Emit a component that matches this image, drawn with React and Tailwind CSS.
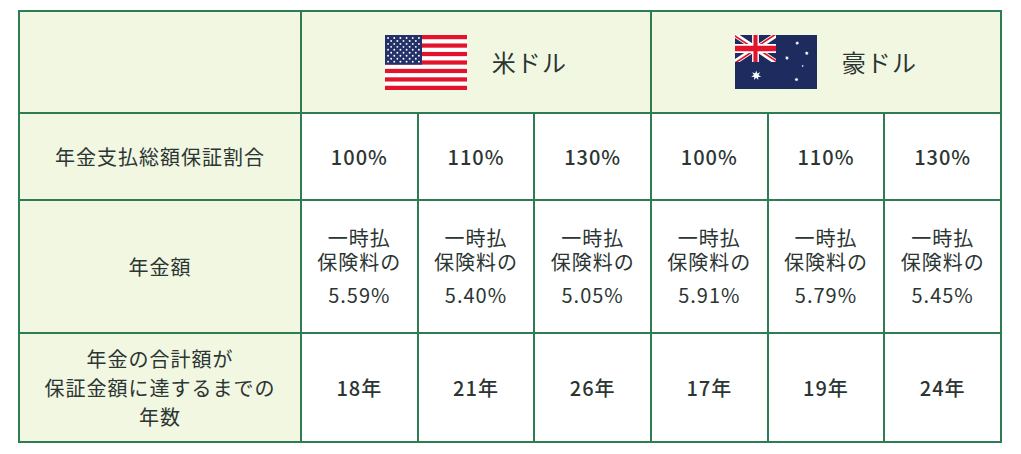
import React from 'react';

const FONT = { fontFamily: '"Noto Sans CJK JP", "Noto Sans", sans-serif' };

function starPoints(cx, cy, outer, inner, n) {
    const pts = [];
    for (let i = 0; i < n * 2; i++) {
        const r = i % 2 === 0 ? outer : inner;
        const a = (Math.PI / n) * i - Math.PI / 2;
        pts.push((cx + r * Math.cos(a)).toFixed(2) + ',' + (cy + r * Math.sin(a)).toFixed(2));
    }
    return pts.join(' ');
}

function UsFlag() {
    const W = 82, H = 55, sh = H / 13, cw = 37, ch = sh * 7;
    const stars = [];
    for (let i = 0; i < 9; i++) {
        const count = i % 2 === 0 ? 6 : 5;
        for (let j = 0; j < count; j++) {
            const x = i % 2 === 0 ? (cw * (2 * j + 1)) / 12 : (cw * (2 * j + 2)) / 12;
            const y = (ch * (i + 1)) / 10;
            stars.push(<circle key={i + '-' + j} cx={x} cy={y} r="0.95" fill="#fff" />);
        }
    }
    return (
        <svg width={W} height={H} viewBox={`0 0 ${W} ${H}`} className="shrink-0">
            <rect width={W} height={H} fill="#fff" />
            {Array.from({ length: 7 }).map((_, i) => (
                <rect key={i} x="0" y={i * 2 * sh} width={W} height={sh} fill="#e3132b" />
            ))}
            <rect width={cw} height={ch} fill="#243169" />
            {stars}
        </svg>
    );
}

function AuFlag() {
    const south = [
        [91, 12, 3.2],
        [105, 27, 3.2],
        [76, 34, 3.2],
        [90, 66, 3.2],
    ];
    return (
        <svg width="82" height="54" viewBox="0 0 120 80" preserveAspectRatio="none" className="shrink-0">
            <defs>
                <clipPath id="ujs"><path d="M0,0 v30 h60 v-30 z" /></clipPath>
                <clipPath id="ujt"><path d="M30,15 h30 v15 z v15 h-30 z h-30 v-15 z v-15 h30 z" /></clipPath>
            </defs>
            <rect width="120" height="80" fill="#1d2b5f" />
            <g transform="scale(1,1.3333)" clipPath="url(#ujs)">
                <path d="M0,0 v30 h60 v-30 z" fill="#1d2b5f" />
                <path d="M0,0 L60,30 M60,0 L0,30" stroke="#fff" strokeWidth="6" />
                <path d="M0,0 L60,30 M60,0 L0,30" clipPath="url(#ujt)" stroke="#e3132b" strokeWidth="4" />
                <path d="M30,0 v30 M0,15 h60" stroke="#fff" strokeWidth="10" />
                <path d="M30,0 v30 M0,15 h60" stroke="#e3132b" strokeWidth="6" />
            </g>
            <polygon points={starPoints(31, 60, 7.5, 3.4, 7)} fill="#fff" />
            {south.map(([x, y, r], i) => (
                <polygon key={i} points={starPoints(x, y, r, r * 0.45, 7)} fill="#fff" />
            ))}
            <polygon points={starPoints(99, 46, 1.8, 0.8, 5)} fill="#fff" />
        </svg>
    );
}

const rates = {
    usd: ['5.59%', '5.40%', '5.05%'],
    aud: ['5.91%', '5.79%', '5.45%'],
};
const years = ['18年', '21年', '26年', '17年', '19年', '24年'];
const ratios = ['100%', '110%', '130%', '100%', '110%', '130%'];

const cell = 'border-2 border-[#2e7d52] text-center align-middle';
const label = cell + ' bg-[#f2f7e2] text-[20px] tracking-[0.05em] font-normal';
const data = cell + ' bg-white text-[20px] tracking-[0.05em] font-medium';

export default function App() {
    const allRates = [...rates.usd, ...rates.aud];
    return (
        <div className="w-[1021px] h-[454px] bg-white pl-[18px] pt-[10px] text-[#2b3532]" style={FONT}>
            <table className="table-fixed w-[984px] border-collapse">
                <colgroup>
                    <col className="w-[282px]" />
                    <col /><col /><col /><col /><col /><col />
                </colgroup>
                <tbody>
                    <tr className="h-[102px]">
                        <td className={label}></td>
                        <td colSpan={3} className={label}>
                            <div className="flex items-center justify-center gap-[25px]">
                                <UsFlag />
                                <span className="text-[24px] tracking-[0.05em]">米ドル</span>
                            </div>
                        </td>
                        <td colSpan={3} className={label}>
                            <div className="flex items-center justify-center gap-[25px]">
                                <AuFlag />
                                <span className="text-[24px] tracking-[0.05em]">豪ドル</span>
                            </div>
                        </td>
                    </tr>
                    <tr className="h-[87px]">
                        <td className={label}>年金支払総額保証割合</td>
                        {ratios.map((r, i) => (
                            <td key={i} className={data}>{r}</td>
                        ))}
                    </tr>
                    <tr className="h-[133px]">
                        <td className={label}>年金額</td>
                        {allRates.map((r, i) => (
                            <td key={i} className={cell + ' bg-white text-[20px] tracking-[0.05em] font-normal'}>
                                <div className="leading-[24px]">一時払</div>
                                <div className="leading-[24px]">保険料の</div>
                                <div className="leading-[24px] mt-[9px]">{r}</div>
                            </td>
                        ))}
                    </tr>
                    <tr className="h-[109px]">
                        <td className={label + ' leading-[29px]'}>
                            年金の合計額が<br />保証金額に達するまでの<br />年数
                        </td>
                        {years.map((y, i) => (
                            <td key={i} className={data}>{y}</td>
                        ))}
                    </tr>
                </tbody>
            </table>
        </div>
    );
}
